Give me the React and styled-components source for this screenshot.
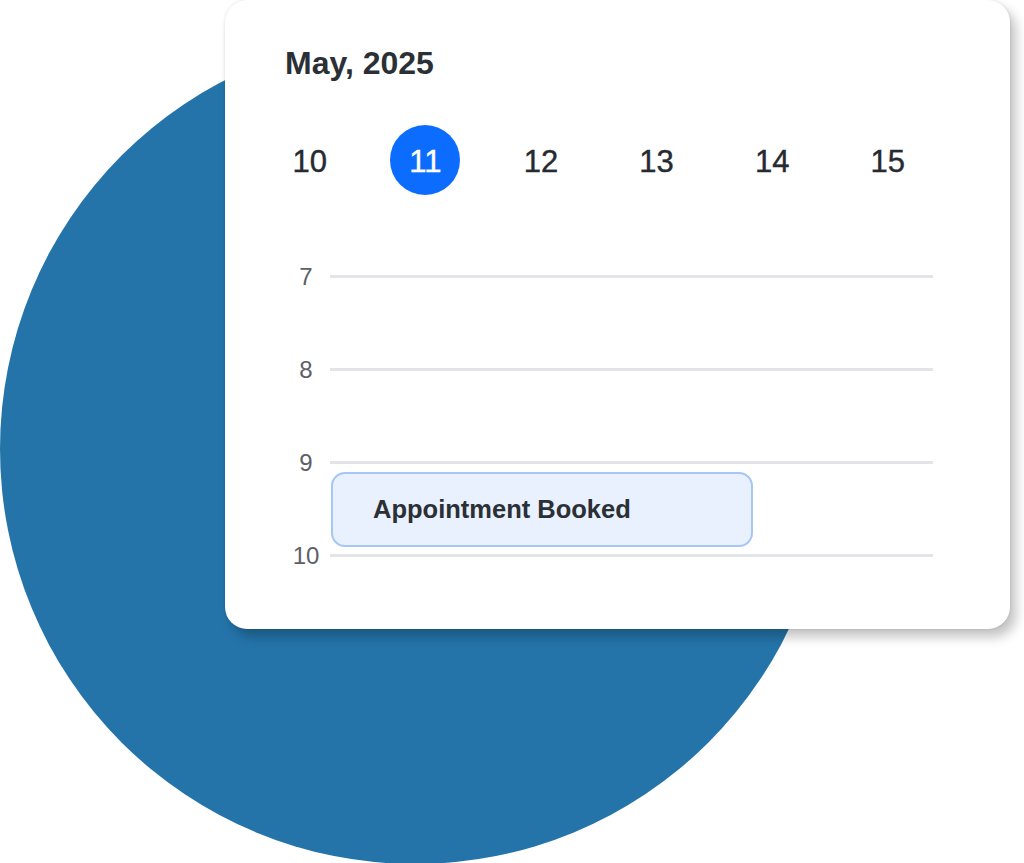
import React from "react";
import styled, { createGlobalStyle } from "styled-components";

const GlobalStyle = createGlobalStyle`
  html, body {
    margin: 0;
    padding: 0;
    background: #ffffff;
    overflow: hidden;
  }
  * {
    box-sizing: border-box;
  }
`;

const Stage = styled.div`
  position: relative;
  width: 1024px;
  height: 863px;
  overflow: hidden;
  font-family: "Liberation Sans", Arial, sans-serif;
`;

const Blob = styled.div`
  position: absolute;
  left: 0;
  top: 34px;
  width: 830px;
  height: 830px;
  border-radius: 50%;
  background: #2474aa;
  z-index: 0;
`;

const Card = styled.div`
  position: relative;
  z-index: 1;
  margin-left: 225px;
  width: 785px;
  height: 629px;
  background: #ffffff;
  border-radius: 22px;
  box-shadow: 6px 8px 12px rgba(0, 0, 0, 0.24), 0 0 3px rgba(0, 0, 0, 0.12);
  padding-top: 47px;
`;

const Title = styled.h2`
  margin: 0 0 0 60px;
  font-size: 32px;
  line-height: 1;
  font-weight: 700;
  color: #2b2f36;
`;

const DayRow = styled.div`
  display: grid;
  grid-template-columns: repeat(6, 115.6px);
  margin: 46px 0 0 27px;
`;

const Day = styled.div`
  display: flex;
  align-items: center;
  justify-content: center;
  height: 70px;
`;

const DayNumber = styled.span`
  display: flex;
  align-items: center;
  justify-content: center;
  width: 70px;
  height: 70px;
  padding-top: 3px;
  border-radius: 50%;
  font-size: 31px;
  line-height: 1;
  color: ${(p) => (p.$active ? "#ffffff" : "#262a31")};
  background: ${(p) => (p.$active ? "#0b6cfe" : "transparent")};
  -webkit-text-stroke: 0.4px ${(p) => (p.$active ? "#ffffff" : "#262a31")};
`;

const Timeline = styled.div`
  position: relative;
  margin: 35px 0 0 57px;
  width: 651px;
`;

const HourRow = styled.div`
  display: flex;
  align-items: center;
  height: 93px;
`;

const HourLabel = styled.span`
  width: 48px;
  text-align: center;
  font-size: 24px;
  line-height: 1;
  color: #5c6066;
`;

const HourLine = styled.div`
  flex: 1;
  height: 3px;
  background: #e2e4e8;
`;

const Event = styled.div`
  position: absolute;
  left: 49px;
  top: ${(p) => p.$top}px;
  width: 422px;
  height: 75px;
  display: flex;
  align-items: center;
  padding-left: 40px;
  background: #e8f1fd;
  border: 2.5px solid #a6c7f5;
  border-radius: 14px;
  font-size: 25.5px;
  font-weight: 700;
  color: #2b2f36;
`;

const days = [10, 11, 12, 13, 14, 15];
const hours = [7, 8, 9, 10];

export default function App() {
  return (
    <Stage>
      <GlobalStyle />
      <Blob />
      <Card>
        <Title>May, 2025</Title>
        <DayRow>
          {days.map((d) => (
            <Day key={d}>
              <DayNumber $active={d === 11}>{d}</DayNumber>
            </Day>
          ))}
        </DayRow>
        <Timeline>
          {hours.map((h) => (
            <HourRow key={h}>
              <HourLabel>{h}</HourLabel>
              <HourLine />
            </HourRow>
          ))}
          <Event $top={242}>Appointment Booked</Event>
        </Timeline>
      </Card>
    </Stage>
  );
}
